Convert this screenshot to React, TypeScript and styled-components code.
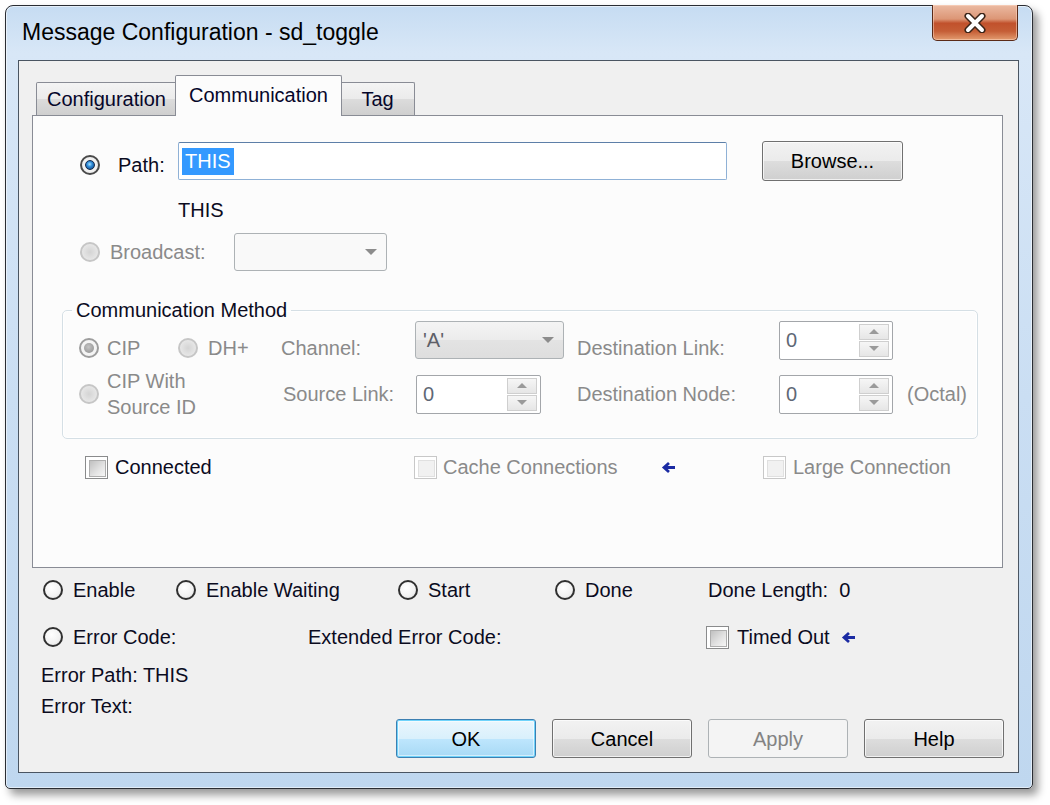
import React from 'react'
import styled, { createGlobalStyle, css } from 'styled-components'

const GlobalStyle = createGlobalStyle`
	html, body {
		margin: 0;
		padding: 0;
		background: #ffffff;
	}
	body {
		font-family: 'Liberation Sans', Arial, sans-serif;
		font-size: 20px;
		line-height: 24px;
		color: #0b0b1e;
	}
	* {
		box-sizing: border-box;
	}
`

const Page = styled.div`
	width: 1050px;
	height: 805px;
	padding: 5px 0 0 5px;
`

const Window = styled.div`
	width: 1028px;
	height: 784px;
	display: flex;
	flex-direction: column;
	padding: 0 13px 15px 12px;
	border: 1px solid #2a2d33;
	border-radius: 8px 8px 5px 5px;
	background: linear-gradient(180deg, #c6dcf2 0%, #d8e7f7 6%, #cadef3 50%, #bfd7ef 100%);
	box-shadow: inset 0 0 0 1px rgba(255, 255, 255, 0.55), 5px 6px 8px rgba(0, 0, 0, 0.4);
`

const TitleBar = styled.div`
	height: 54px;
	flex: none;
	display: flex;
	justify-content: space-between;
	align-items: flex-start;
`

const Title = styled.div`
	align-self: center;
	padding-left: 4px;
	margin-top: -2px;
	font-size: 23px;
	color: #000000;
`

const CloseButton = styled.div`
	width: 86px;
	height: 36px;
	margin: -1px 1px 0 0;
	display: flex;
	align-items: center;
	justify-content: center;
	border: 1px solid #5a2a18;
	border-top: none;
	border-radius: 0 0 5px 5px;
	background: linear-gradient(180deg, #ebbaa2 0%, #dc9676 40%, #c1512c 52%, #c55e36 75%, #e39c70 100%);
	box-shadow: inset 0 0 0 1px rgba(255, 220, 200, 0.5);
`

const Client = styled.div`
	flex: 1;
	display: flex;
	flex-direction: column;
	border: 1px solid #4a5562;
	background: #f0f0f0;
`

const TabStrip = styled.div`
	height: 40px;
	margin: 14px 0 0 17px;
	display: flex;
	align-items: flex-end;
	position: relative;
	z-index: 1;
`

const Tab = styled.div<{ $active?: boolean; $w: number }>`
	width: ${({ $w }) => $w}px;
	display: flex;
	align-items: center;
	justify-content: center;
	border: 1px solid #898c95;
	border-bottom: none;
	border-radius: 2px 2px 0 0;
	color: #06062a;
	${({ $active }) =>
		$active
			? css`
					height: 41px;
					margin: 0 -2px -1px;
					background: #fcfcfc;
					padding-bottom: 2px;
					position: relative;
			  `
			: css`
					height: 33px;
					background: linear-gradient(180deg, #f4f4f4 0%, #ebebeb 50%, #dcdcdc 51%, #cfcfcf 100%);
			  `}
`

const Panel = styled.div`
	width: 971px;
	height: 453px;
	margin-left: 13px;
	padding-top: 25px;
	border: 1px solid #898c95;
	background: #fcfcfc;
`

const Row = styled.div<{ $pl: number; $mt?: number; $h?: number }>`
	display: flex;
	align-items: center;
	padding-left: ${({ $pl }) => $pl}px;
	margin-top: ${({ $mt = 0 }) => $mt}px;
	height: ${({ $h = 24 }) => $h}px;
`

const Option = styled.div<{ $w?: number; $gap?: number; $drop?: number }>`
	display: flex;
	align-items: center;
	flex: none;
	gap: ${({ $gap = 10 }) => $gap}px;
	${({ $w }) => ($w ? `width: ${$w}px;` : '')}
	${({ $drop }) => ($drop ? `padding-top: ${$drop}px;` : '')}
`

const Text = styled.span<{ $disabled?: boolean }>`
	white-space: nowrap;
	color: ${({ $disabled }) => ($disabled ? '#8a8a8a' : '#0b0b1e')};
`

type RadioState = 'off' | 'on' | 'disabled' | 'disabledOn'

const radioLook: Record<RadioState, ReturnType<typeof css>> = {
	off: css`
		border: 2px solid #303030;
		background: radial-gradient(circle at 40% 35%, #ffffff 0%, #f2f2f2 60%, #d8d8d8 100%);
	`,
	on: css`
		border: 2px solid #4a4a4a;
		background: radial-gradient(circle, #ffffff 0%, #e6e6e6 100%);
		&::after {
			content: '';
			position: absolute;
			inset: 3px;
			border-radius: 50%;
			border: 1px solid #13284a;
			background: radial-gradient(circle at 45% 40%, #a8e4ff 0%, #2d8ad8 40%, #0c3771 100%);
		}
	`,
	disabled: css`
		border: 2px solid #c6c6c6;
		background: radial-gradient(circle, #d4d4d4 0%, #e4e4e4 60%, #efefef 100%);
	`,
	disabledOn: css`
		border: 2px solid #9d9d9d;
		background: #f4f4f4;
		&::after {
			content: '';
			position: absolute;
			inset: 3px;
			border-radius: 50%;
			background: radial-gradient(circle at 45% 40%, #c4c4c4 0%, #8c8c8c 100%);
		}
	`,
}

const RadioMark = styled.span<{ $state: RadioState }>`
	position: relative;
	flex: none;
	width: 20px;
	height: 20px;
	border-radius: 50%;
	${({ $state }) => radioLook[$state]}
`

const CheckMark = styled.span<{ $disabled?: boolean }>`
	flex: none;
	width: 23px;
	height: 23px;
	padding: 3px;
	border: 1px solid ${({ $disabled }) => ($disabled ? '#c8c8c8' : '#8a8b8c')};
	background: #ffffff;
	&::before {
		content: '';
		display: block;
		width: 100%;
		height: 100%;
		border: 1px solid ${({ $disabled }) => ($disabled ? '#e0e0e0' : '#aeaeae')};
		background: ${({ $disabled }) =>
			$disabled ? '#f1f1f1' : 'linear-gradient(135deg, #c0c0c0 0%, #e4e4e4 60%, #f6f6f6 100%)'};
	}
`

const PathInput = styled.div`
	width: 549px;
	height: 38px;
	display: flex;
	align-items: center;
	padding-left: 3px;
	border: 1px solid #8fb1d6;
	border-top-color: #5d7fa8;
	border-radius: 2px;
	background: #ffffff;
`

const Selection = styled.span`
	padding: 0 3px;
	line-height: 27px;
	background: #3399ff;
	color: #ffffff;
`

type ButtonKind = 'normal' | 'default' | 'disabled'

const DlgButton = styled.div<{ $kind?: ButtonKind; $w?: number; $h?: number }>`
	width: ${({ $w = 140 }) => $w}px;
	height: ${({ $h = 39 }) => $h}px;
	flex: none;
	display: flex;
	align-items: center;
	justify-content: center;
	border-radius: 3px;
	${({ $kind = 'normal' }) =>
		$kind === 'default'
			? css`
					border: 1px solid #3c7fb1;
					background: linear-gradient(180deg, #eaf6fd 0%, #d9f0fc 50%, #bee6fd 51%, #a7d9f5 100%);
					box-shadow: inset 0 0 0 1px #6fd3fb, inset 0 0 0 2px rgba(255, 255, 255, 0.5);
					color: #000000;
			  `
			: $kind === 'disabled'
			? css`
					border: 1px solid #adb2b5;
					background: #f4f4f4;
					color: #838383;
			  `
			: css`
					border: 1px solid #707070;
					background: linear-gradient(180deg, #f2f2f2 0%, #ebebeb 50%, #dddddd 51%, #cfcfcf 100%);
					box-shadow: inset 0 0 0 1px rgba(255, 255, 255, 0.7);
					color: #000000;
			  `}
`

const Combo = styled.div<{ $w: number; $filled?: boolean }>`
	width: ${({ $w }) => $w}px;
	height: 38px;
	flex: none;
	display: flex;
	align-items: center;
	justify-content: space-between;
	padding: 0 9px 0 7px;
	border: 1px solid #adb2b5;
	border-radius: 3px;
	color: #5e6068;
	background: ${({ $filled }) =>
		$filled ? 'linear-gradient(180deg, #f4f4f4 0%, #ececec 50%, #e3e3e3 51%, #dedede 100%)' : '#f9f9f9'};
`

const ComboArrow = styled.span`
	width: 0;
	height: 0;
	border-left: 6px solid transparent;
	border-right: 6px solid transparent;
	border-top: 6px solid #8c8c8c;
`

const Group = styled.fieldset`
	width: 916px;
	margin: 29px 0 0 29px;
	padding: 0 0 24px 16px;
	border: 1px solid #d5dfe5;
	border-radius: 5px;
	box-shadow: inset 0 0 0 1px rgba(255, 255, 255, 0.8);
`

const Legend = styled.legend`
	margin-left: -7px;
	padding: 0 4px;
	line-height: 20px;
	color: #0b0b1e;
`

const GroupGrid = styled.div`
	display: grid;
	grid-template-columns: 99px 103px 134px 162px 202px 128px auto;
	grid-template-rows: 40px 40px;
	row-gap: 14px;
`

const Cell = styled.div<{ $align?: 'end' | 'center'; $span?: number; $shift?: number }>`
	display: flex;
	align-items: center;
	align-self: ${({ $align = 'center' }) => $align};
	${({ $span }) => ($span ? `grid-column: span ${$span};` : '')}
	${({ $shift }) => ($shift ? `padding-left: ${$shift}px;` : '')}
`

const TwoLine = styled.span`
	line-height: 26px;
	color: #8a8a8a;
`

const SpinBox = styled.div<{ $w: number }>`
	width: ${({ $w }) => $w}px;
	height: 39px;
	flex: none;
	display: flex;
	align-items: stretch;
	padding: 2px;
	border: 1px solid #a3a6aa;
	border-radius: 2px;
	background: #ffffff;
`

const SpinValue = styled.span`
	flex: 1;
	padding-left: 4px;
	display: flex;
	align-items: center;
	color: #5f6876;
`

const SpinButtons = styled.div`
	width: 30px;
	display: flex;
	flex-direction: column;
	gap: 1px;
	margin-right: 1px;
`

const SpinHalf = styled.div<{ $down?: boolean }>`
	flex: 1;
	display: flex;
	align-items: center;
	justify-content: center;
	border: 1px solid #cfcfcf;
	background: linear-gradient(180deg, #f6f6f6 0%, #e6e6e6 100%);
	&::after {
		content: '';
		border-left: 5px solid transparent;
		border-right: 5px solid transparent;
		${({ $down }) => ($down ? 'border-top: 5px solid #9a9a9a;' : 'border-bottom: 5px solid #9a9a9a;')}
	}
`

const StatusRow = styled.div<{ $mt: number }>`
	display: flex;
	align-items: center;
	height: 24px;
	margin-top: ${({ $mt }) => $mt}px;
	padding-left: 24px;
`

const InfoLine = styled.div<{ $mt: number }>`
	height: 24px;
	margin-top: ${({ $mt }) => $mt}px;
	padding-left: 22px;
	white-space: pre;
`

const ButtonBar = styled.div`
	display: flex;
	justify-content: flex-end;
	gap: 16px;
	margin-top: 1px;
	padding-right: 14px;
`

const BackArrow = ({ ml = 0 }: { ml?: number }) => (
	<svg width="15" height="13" viewBox="0 0 15 13" style={{ marginLeft: ml, flex: 'none' }}>
		<path d="M14 6.5H3.5M8 2L3 6.5l5 4.5" fill="none" stroke="#1b2ba3" strokeWidth="2.8" />
	</svg>
)

const CloseGlyph = () => (
	<svg width="26" height="20" viewBox="0 0 26 20">
		<path d="M6 3l14 14M20 3L6 17" stroke="#3a2418" strokeWidth="7" strokeLinecap="round" />
		<path d="M6 3l14 14M20 3L6 17" stroke="#ffffff" strokeWidth="4" strokeLinecap="round" />
	</svg>
)

const Spin = ({ w, value }: { w: number; value: string }) => (
	<SpinBox $w={w}>
		<SpinValue>{value}</SpinValue>
		<SpinButtons>
			<SpinHalf />
			<SpinHalf $down />
		</SpinButtons>
	</SpinBox>
)

export default function App() {
	return (
		<Page>
			<GlobalStyle />
			<Window>
				<TitleBar>
					<Title>Message Configuration - sd_toggle</Title>
					<CloseButton>
						<CloseGlyph />
					</CloseButton>
				</TitleBar>
				<Client>
					<TabStrip>
						<Tab $w={141}>Configuration</Tab>
						<Tab $w={167} $active>
							Communication
						</Tab>
						<Tab $w={75}>Tag</Tab>
					</TabStrip>
					<Panel>
						<Row $pl={47} $h={40}>
							<Option $w={98} $gap={18} $drop={8}>
								<RadioMark $state="on" />
								<Text>Path:</Text>
							</Option>
							<PathInput>
								<Selection>THIS</Selection>
							</PathInput>
							<DlgButton $w={141} $h={40} style={{ marginLeft: 35 }}>
								Browse...
							</DlgButton>
						</Row>
						<Row $pl={145} $mt={17}>
							<Text>THIS</Text>
						</Row>
						<Row $pl={47} $mt={11} $h={38}>
							<Option $w={154}>
								<RadioMark $state="disabled" />
								<Text $disabled>Broadcast:</Text>
							</Option>
							<Combo $w={153}>
								<span />
								<ComboArrow />
							</Combo>
						</Row>

						<Group>
							<Legend>Communication Method</Legend>
							<GroupGrid>
								<Cell $align="end">
									<Option $gap={8}>
										<RadioMark $state="disabledOn" />
										<Text $disabled>CIP</Text>
									</Option>
								</Cell>
								<Cell $align="end">
									<Option $gap={10}>
										<RadioMark $state="disabled" />
										<Text $disabled>DH+</Text>
									</Option>
								</Cell>
								<Cell $align="end">
									<Text $disabled>Channel:</Text>
								</Cell>
								<Cell>
									<Combo $w={149} $filled>
										<span>'A'</span>
										<ComboArrow />
									</Combo>
								</Cell>
								<Cell $align="end">
									<Text $disabled>Destination Link:</Text>
								</Cell>
								<Cell>
									<Spin w={114} value="0" />
								</Cell>
								<Cell />

								<Cell $span={2}>
									<Option $gap={8}>
										<RadioMark $state="disabled" />
										<TwoLine>
											CIP With
											<br />
											Source ID
										</TwoLine>
									</Option>
								</Cell>
								<Cell $shift={2}>
									<Text $disabled>Source Link:</Text>
								</Cell>
								<Cell $shift={1}>
									<Spin w={125} value="0" />
								</Cell>
								<Cell>
									<Text $disabled>Destination Node:</Text>
								</Cell>
								<Cell>
									<Spin w={114} value="0" />
								</Cell>
								<Cell>
									<Text $disabled>(Octal)</Text>
								</Cell>
							</GroupGrid>
						</Group>

						<Row $pl={52} $mt={16}>
							<Option $w={329} $gap={7}>
								<CheckMark />
								<Text>Connected</Text>
							</Option>
							<Option $w={349} $gap={6}>
								<CheckMark $disabled />
								<Text $disabled>Cache Connections</Text>
								<BackArrow ml={37} />
							</Option>
							<Option $gap={7}>
								<CheckMark $disabled />
								<Text $disabled>Large Connection</Text>
							</Option>
						</Row>
					</Panel>

					<StatusRow $mt={10}>
						<Option $w={133}>
							<RadioMark $state="off" />
							<Text>Enable</Text>
						</Option>
						<Option $w={222}>
							<RadioMark $state="off" />
							<Text>Enable Waiting</Text>
						</Option>
						<Option $w={157}>
							<RadioMark $state="off" />
							<Text>Start</Text>
						</Option>
						<Option $w={153}>
							<RadioMark $state="off" />
							<Text>Done</Text>
						</Option>
						<Text>Done Length:&nbsp; 0</Text>
					</StatusRow>
					<StatusRow $mt={23}>
						<Option $w={265}>
							<RadioMark $state="off" />
							<Text>Error Code:</Text>
						</Option>
						<Option $w={398}>
							<Text>Extended Error Code:</Text>
						</Option>
						<Option $gap={8}>
							<CheckMark />
							<Text>Timed Out</Text>
							<BackArrow ml={3} />
						</Option>
					</StatusRow>
					<InfoLine $mt={14}>Error Path: THIS</InfoLine>
					<InfoLine $mt={7}>Error Text:</InfoLine>
					<ButtonBar>
						<DlgButton $kind="default">OK</DlgButton>
						<DlgButton>Cancel</DlgButton>
						<DlgButton $kind="disabled">Apply</DlgButton>
						<DlgButton>Help</DlgButton>
					</ButtonBar>
				</Client>
			</Window>
		</Page>
	)
}
